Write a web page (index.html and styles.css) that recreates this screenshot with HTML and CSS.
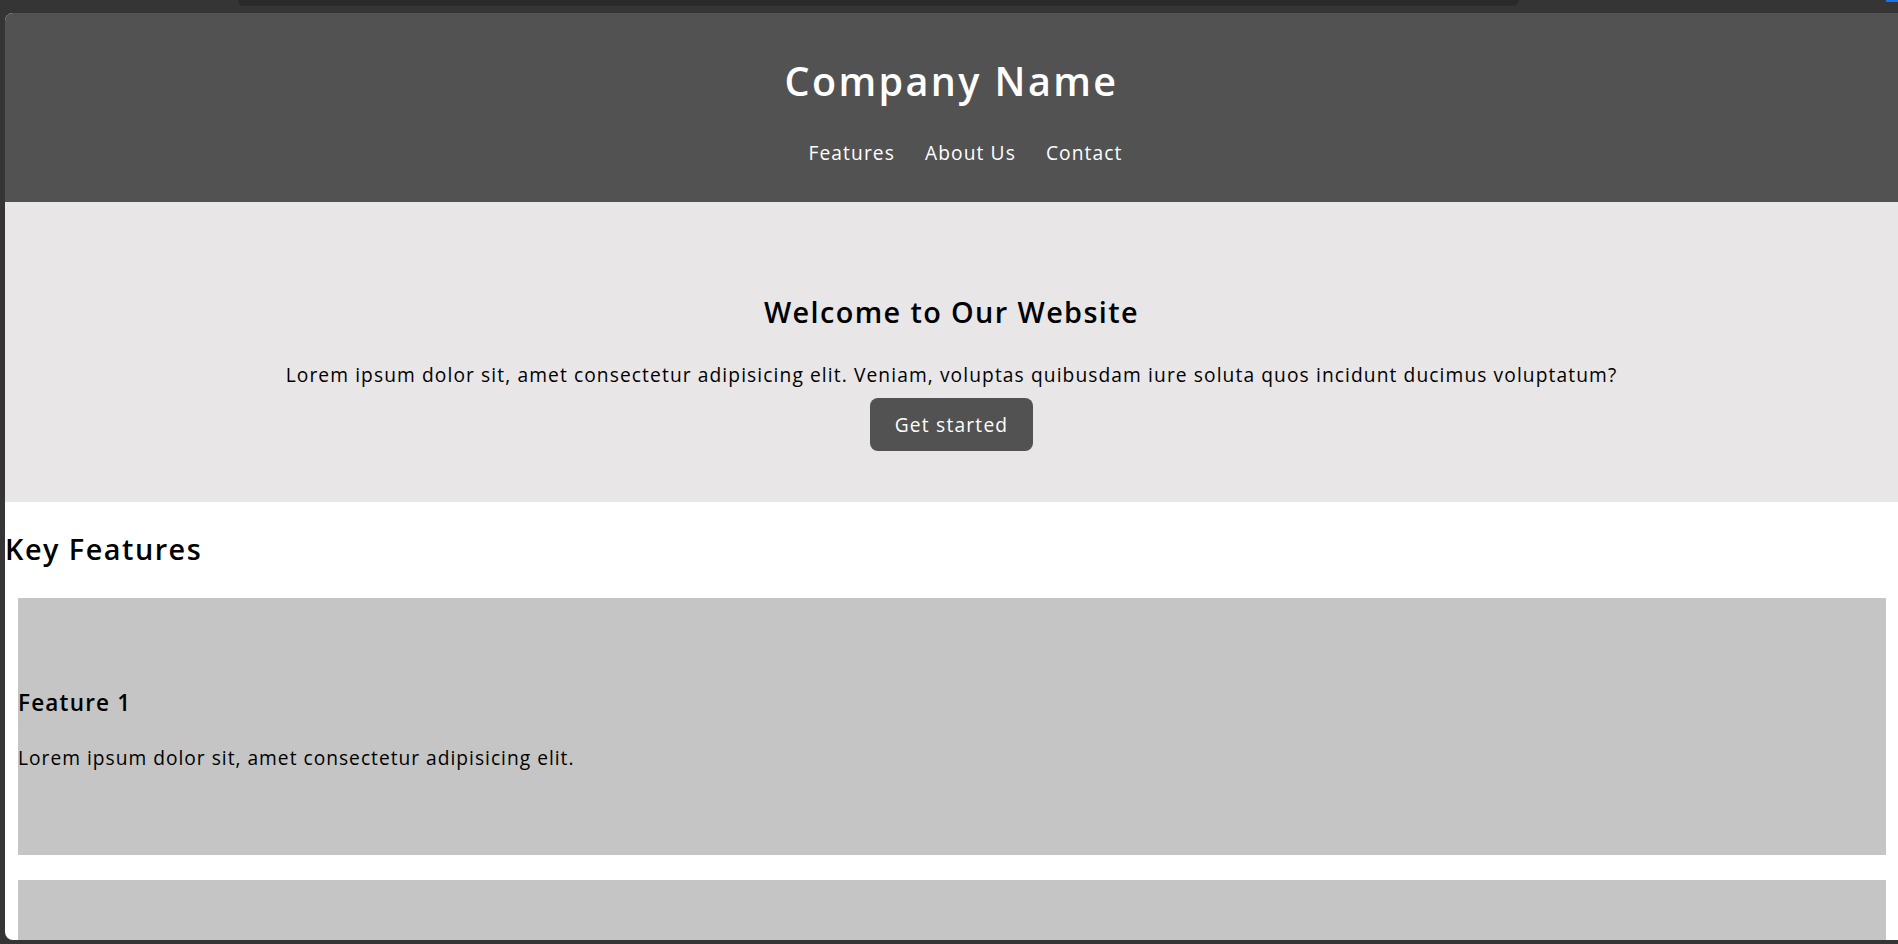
FILE: index.html
```html
<!DOCTYPE html>
<html lang="en">
<head>
<meta charset="utf-8">
<title>Company Name</title>
<link rel="stylesheet" href="styles.css">
</head>
<body>
<div class="frame-top">
  <div class="frame-tab"></div>
  <div class="frame-dot"></div>
</div>
<div class="window">
  <header class="site-header">
    <h1 class="brand">Company Name</h1>
    <nav class="nav">
      <a href="#features">Features</a>
      <a href="#about">About Us</a>
      <a href="#contact">Contact</a>
    </nav>
  </header>
  <section class="hero">
    <h2 class="hero-title">Welcome to Our Website</h2>
    <p class="hero-text">Lorem ipsum dolor sit, amet consectetur adipisicing elit. Veniam, voluptas quibusdam iure soluta quos incidunt ducimus voluptatum?</p>
    <a class="btn" href="#">Get started</a>
  </section>
  <section class="features" id="features">
    <h2 class="features-title">Key Features</h2>
    <div class="feature-list">
      <div class="feature">
        <h3>Feature 1</h3>
        <p>Lorem ipsum dolor sit, amet consectetur adipisicing elit.</p>
      </div>
      <div class="feature">
        <h3>Feature 2</h3>
        <p>Lorem ipsum dolor sit, amet consectetur adipisicing elit.</p>
      </div>
    </div>
  </section>
</div>
</body>
</html>
```
FILE: styles.css
```css
* { box-sizing: border-box; }
html, body { height: 100%; }
body {
  margin: 0;
  background: #353535;
  font-family: "Open Sans", "Liberation Sans", sans-serif;
  color: #000;
  display: flex;
  flex-direction: column;
  overflow: hidden;
}
.frame-top {
  height: 13px;
  flex: none;
  display: flex;
  align-items: flex-start;
}
.frame-tab {
  margin-left: 238px;
  width: 1281px;
  height: 6px;
  background: #2a2a2a;
  border-radius: 0 0 8px 8px;
}
.frame-dot {
  margin-left: auto;
  width: 12px;
  height: 2px;
  background: #1a73e8;
}
.window {
  flex: 1;
  min-height: 0;
  margin: 0 0 4px 5px;
  background: #fff;
  border-radius: 8px 0 0 8px;
  overflow: hidden;
}
.site-header {
  background: #525252;
  color: #fff;
  height: 189px;
  text-align: center;
  padding-top: 45px;
}
.brand {
  margin: 0;
  font-size: 39.5px;
  font-weight: 600;
  line-height: 46px;
  letter-spacing: 2.4px;
}
.nav {
  display: flex;
  justify-content: center;
  gap: 30px;
  margin-top: 37px;
  padding-left: 28px;
}
.nav a {
  color: #fff;
  text-decoration: none;
  font-size: 19.2px;
  line-height: 24px;
  letter-spacing: 1.1px;
}
.hero {
  background: #e8e6e6;
  height: 300px;
  text-align: center;
  padding-top: 90px;
}
.hero-title {
  margin: 0;
  font-size: 28.8px;
  font-weight: 600;
  line-height: 40px;
  letter-spacing: 1.4px;
}
.hero-text {
  margin: 31px 0 11px;
  font-size: 19.2px;
  line-height: 24px;
  letter-spacing: 1.1px;
}
.btn {
  display: inline-block;
  background: #525252;
  color: #fff;
  text-decoration: none;
  font-size: 19.2px;
  line-height: 53px;
  height: 53px;
  padding: 0 25px;
  border-radius: 8px;
  letter-spacing: 1.2px;
}
.features {
  padding-top: 27px;
}
.features-title {
  margin: 0;
  font-size: 28.8px;
  font-weight: 600;
  line-height: 40px;
  letter-spacing: 1.5px;
}
.feature-list {
  display: flex;
  flex-direction: column;
  gap: 25px;
  padding: 29px 12px 0 13px;
}
.feature {
  background: #c4c5c4;
  height: 257px;
  padding-top: 90px;
}
.feature h3 {
  margin: 0;
  font-size: 22.5px;
  font-weight: 600;
  line-height: 30px;
  letter-spacing: 1.2px;
}
.feature p {
  margin: 28px 0 0;
  font-size: 19.2px;
  line-height: 24px;
  letter-spacing: 1px;
}
```
